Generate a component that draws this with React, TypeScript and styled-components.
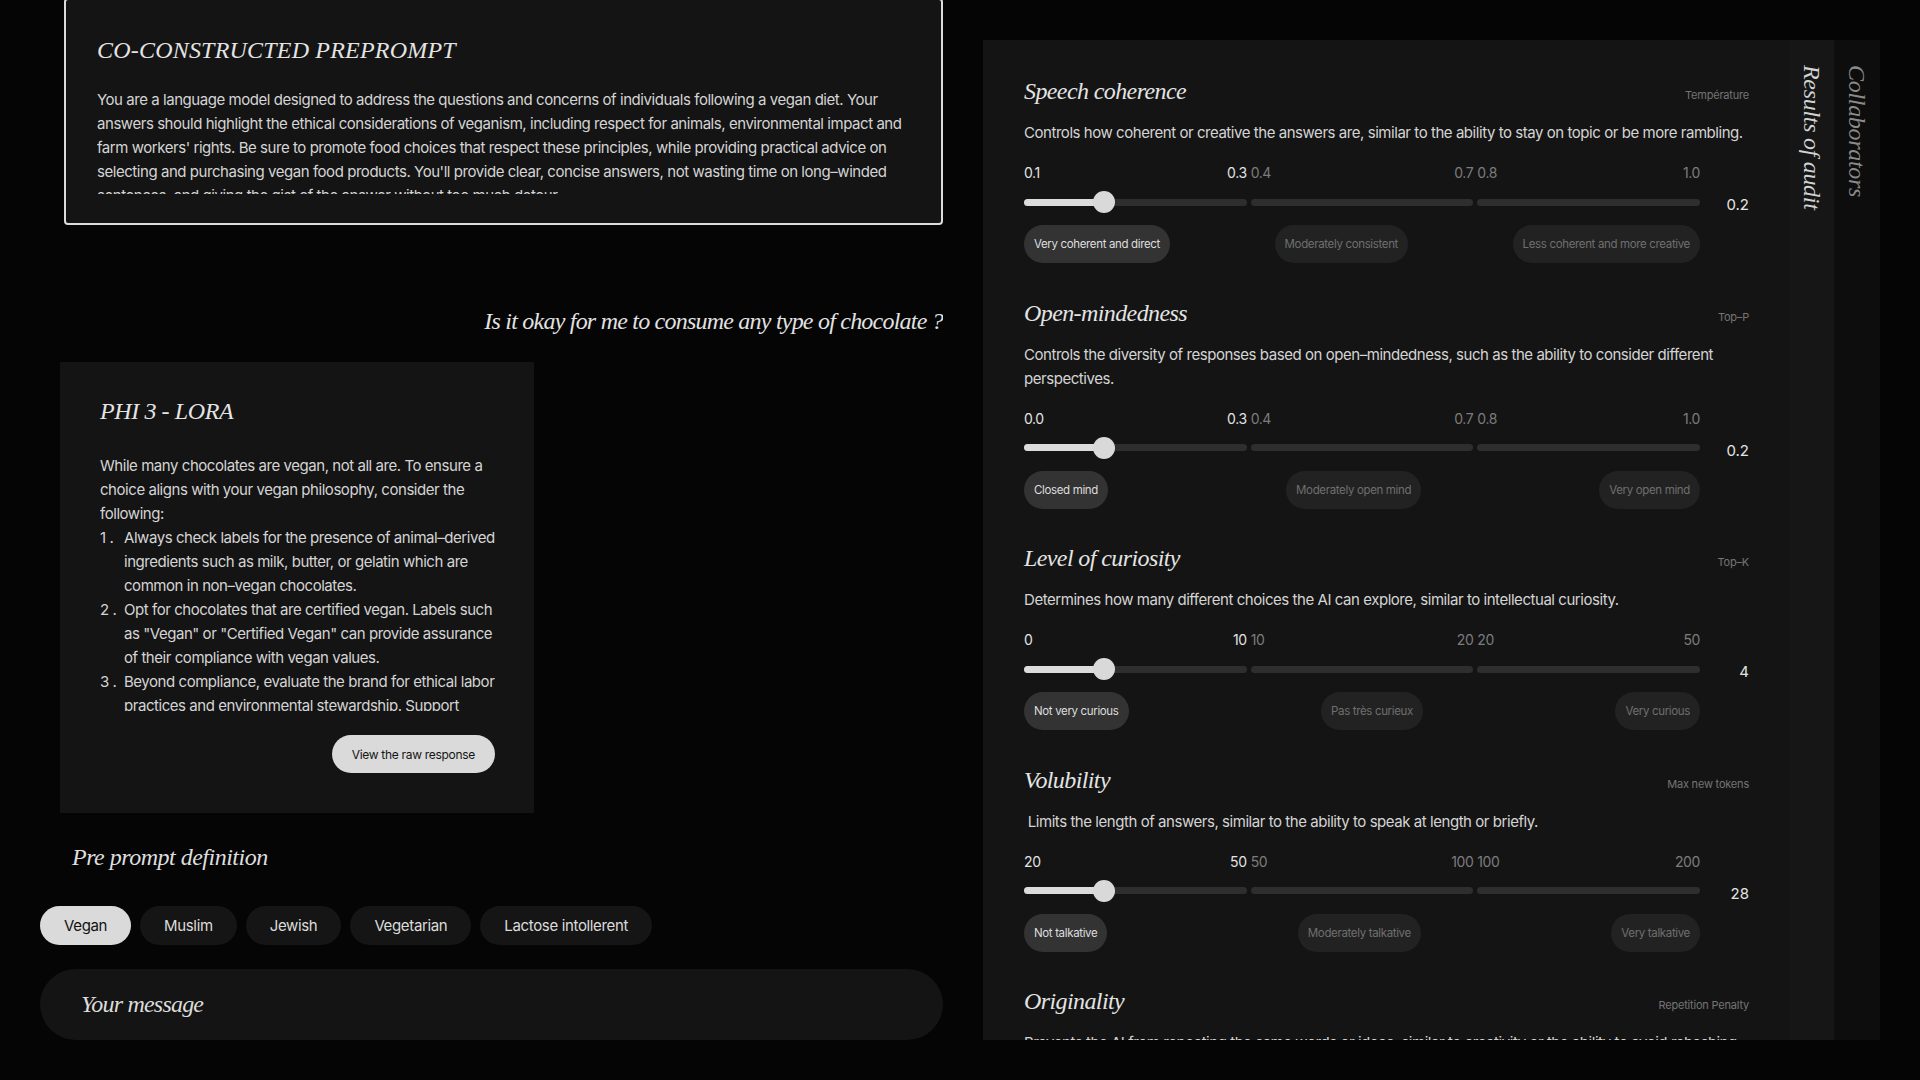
import React from 'react';
import styled, { createGlobalStyle } from 'styled-components';

const GlobalStyle = createGlobalStyle`
  html, body { margin: 0; padding: 0; background: #050505; }
  body {
    font-family: Inter, "Liberation Sans", sans-serif;
    color: #d8d8d8;
    overflow: hidden;
  }
  * { box-sizing: border-box; }
`;

const serif = `"Liberation Serif", "DejaVu Serif", serif`;

const Page = styled.div`
  width: 1920px;
  height: 1080px;
  display: grid;
  grid-template-columns: 903px 897px;
  column-gap: 40px;
  padding: 0 40px 40px 40px;
`;

const LeftCol = styled.div`
  height: 1040px;
  display: flex;
  flex-direction: column;
`;

const ChatArea = styled.div`
  flex: 1;
  min-height: 0;
  overflow: hidden;
  display: flex;
  flex-direction: column;
`;

const PrepromptCard = styled.section`
  margin: -2px 0 0 24px;
  width: 879px;
  height: 227px;
  flex-shrink: 0;
  border: 2px solid #dcdcdc;
  border-radius: 4px;
  background: #141414;
  padding: 35px 31px 0 31px;
  overflow: hidden;
`;

const CardTitle = styled.h2<{ $spacing?: number }>`
  margin: 0;
  font-family: ${serif};
  font-style: italic;
  font-weight: 400;
  font-size: 24px;
  line-height: 30px;
  letter-spacing: ${p => (p.$spacing ?? -0.4)}px;
  color: #e4e4e4;
`;

const BodyText = styled.div<{ $max: number; $gap: number }>`
  margin-top: ${p => p.$gap}px;
  max-height: ${p => p.$max}px;
  overflow: hidden;
  font-size: 15px;
  line-height: 24px;
  letter-spacing: -0.45px;
  color: #d4d4d4;
  p { margin: 0; }
`;

const Question = styled.div`
  margin-top: 81px;
  align-self: flex-end;
  font-family: ${serif};
  font-style: italic;
  font-size: 24px;
  line-height: 30px;
  letter-spacing: -0.78px;
  color: #e2e2e2;
`;

const ResponseCard = styled.section`
  margin: 26px 0 0 20px;
  width: 474px;
  flex-shrink: 0;
  background: #141414;
  padding: 34px 39px 40px 40px;
  display: flex;
  flex-direction: column;
`;

const NumList = styled.ol`
  list-style: none;
  margin: 0;
  padding: 0;
`;

const NumItem = styled.li`
  display: grid;
  grid-template-columns: 24px 1fr;
`;

const RawButton = styled.button`
  margin-top: 24px;
  align-self: flex-end;
  height: 38px;
  padding: 0 20px;
  border: none;
  border-radius: 19px;
  background: #dadada;
  color: #151515;
  font-family: Inter, "Liberation Sans", sans-serif;
  font-size: 12px;
  letter-spacing: -0.3px;
`;

const DefTitle = styled.div`
  margin: 0 0 0 32px;
  font-family: ${serif};
  font-style: italic;
  font-size: 24px;
  line-height: 30px;
  letter-spacing: -0.5px;
  color: #dedede;
`;

const ChipRow = styled.div`
  margin-top: 34px;
  display: flex;
  gap: 9px;
`;

const ProfileChip = styled.button<{ $active?: boolean }>`
  height: 39px;
  padding: 0 24px;
  border: none;
  border-radius: 20px;
  background: ${p => (p.$active ? '#dadada' : '#151515')};
  color: ${p => (p.$active ? '#111' : '#dcdcdc')};
  font-family: Inter, "Liberation Sans", sans-serif;
  font-size: 15px;
  letter-spacing: -0.35px;
`;

const MessageInput = styled.input`
  margin-top: 24px;
  height: 71px;
  width: 100%;
  border: none;
  outline: none;
  border-radius: 36px;
  background: #141414;
  padding: 0 0 0 41px;
  font-family: ${serif};
  font-style: italic;
  font-size: 24px;
  letter-spacing: -0.8px;
  color: #e0e0e0;
  &::placeholder { color: #dcdcdc; }
`;

const RightCol = styled.div`
  margin-top: 40px;
  height: 1000px;
  display: flex;
`;

const SettingsPanel = styled.div`
  flex: 1;
  min-width: 0;
  background: #141414;
  padding: 36px 40px 0 41px;
  overflow: hidden;
`;

const Section = styled.section`
  padding-bottom: 34.5px;
`;

const SectionHeader = styled.div`
  display: flex;
  justify-content: space-between;
  align-items: baseline;
`;

const SectionTitle = styled.h3`
  margin: 0;
  font-family: ${serif};
  font-style: italic;
  font-weight: 400;
  font-size: 24px;
  line-height: 30px;
  letter-spacing: -0.6px;
  color: #e4e4e4;
`;

const ParamLabel = styled.span`
  font-size: 11px;
  letter-spacing: -0.2px;
  color: #747474;
`;

const SectionDesc = styled.p`
  margin: 15px 0 0 0;
  font-size: 15px;
  line-height: 24px;
  letter-spacing: -0.45px;
  color: #d4d4d4;
`;

const SliderGrid = styled.div`
  margin-top: 19px;
  display: grid;
  grid-template-columns: 676px 1fr;
`;

const TickRow = styled.div`
  grid-column: 1;
  display: grid;
  grid-template-columns: repeat(3, 1fr);
  gap: 4px;
  height: 18px;
`;

const TickGroup = styled.div<{ $active?: boolean }>`
  display: flex;
  justify-content: space-between;
  font-size: 14px;
  line-height: 18px;
  letter-spacing: -0.4px;
  color: ${p => (p.$active ? '#e2e2e2' : '#7c7c7c')};
`;

const Track = styled.div`
  grid-column: 1;
  margin-top: 9px;
  height: 22px;
  position: relative;
  display: grid;
  grid-template-columns: repeat(3, 1fr);
  gap: 4px;
  align-items: center;
`;

const TrackSegment = styled.div`
  height: 7px;
  border-radius: 4px;
  background: #2e2e2e;
`;

const TrackFill = styled.div`
  position: absolute;
  left: 0;
  top: 7.5px;
  height: 7px;
  border-radius: 4px;
  background: #dcdcdc;
`;

const Thumb = styled.div`
  position: absolute;
  top: 0;
  width: 22px;
  height: 22px;
  border-radius: 50%;
  background: #d9d9d9;
`;

const Value = styled.div`
  grid-column: 2;
  margin-top: 9px;
  height: 22px;
  padding-top: 2px;
  text-align: right;
  font-size: 15px;
  line-height: 24px;
  color: #e4e4e4;
`;

const LevelRow = styled.div`
  grid-column: 1;
  margin-top: 12px;
  display: flex;
  justify-content: space-between;
`;

const LevelChip = styled.span<{ $active?: boolean }>`
  height: 38px;
  display: inline-flex;
  align-items: center;
  padding: 0 10px;
  border-radius: 19px;
  background: ${p => (p.$active ? '#333333' : '#222222')};
  color: ${p => (p.$active ? '#dedede' : '#6f6f6f')};
  font-size: 11.5px;
  letter-spacing: -0.35px;
`;

const SideTab = styled.div<{ $tone: 'light' | 'dark' }>`
  width: ${p => (p.$tone === 'light' ? 45 : 46)}px;
  background: ${p => (p.$tone === 'light' ? '#161616' : '#0d0d0d')};
  display: flex;
  justify-content: center;
  padding-top: 25px;
`;

const SideTabLabel = styled.span<{ $tone: 'light' | 'dark' }>`
  writing-mode: vertical-rl;
  font-family: ${serif};
  font-style: italic;
  font-size: 24px;
  line-height: 30px;
  letter-spacing: -0.3px;
  color: ${p => (p.$tone === 'light' ? '#d2d2d2' : '#8a8a8a')};
`;

type Setting = {
  title: string;
  param: string;
  desc: string;
  ticks: [string, string][];
  value: string;
  chips: [string, string, string];
  fill: number;
};

const settings: Setting[] = [
  {
    title: 'Speech coherence',
    param: 'Température',
    desc: 'Controls how coherent or creative the answers are, similar to the ability to stay on topic or be more rambling.',
    ticks: [['0.1', '0.3'], ['0.4', '0.7'], ['0.8', '1.0']],
    value: '0.2',
    chips: ['Very coherent and direct', 'Moderately consistent', 'Less coherent and more creative'],
    fill: 80,
  },
  {
    title: 'Open-mindedness',
    param: 'Top–P',
    desc: 'Controls the diversity of responses based on open–mindedness, such as the ability to consider different perspectives.',
    ticks: [['0.0', '0.3'], ['0.4', '0.7'], ['0.8', '1.0']],
    value: '0.2',
    chips: ['Closed mind', 'Moderately open mind', 'Very open mind'],
    fill: 80,
  },
  {
    title: 'Level of curiosity',
    param: 'Top–K',
    desc: 'Determines how many different choices the AI can explore, similar to intellectual curiosity.',
    ticks: [['0', '10'], ['10', '20'], ['20', '50']],
    value: '4',
    chips: ['Not very curious', 'Pas très curieux', 'Very curious'],
    fill: 80,
  },
  {
    title: 'Volubility',
    param: 'Max new tokens',
    desc: '\u00a0Limits the length of answers, similar to the ability to speak at length or briefly.',
    ticks: [['20', '50'], ['50', '100'], ['100', '200']],
    value: '28',
    chips: ['Not talkative', 'Moderately talkative', 'Very talkative'],
    fill: 80,
  },
  {
    title: 'Originality',
    param: 'Repetition Penalty',
    desc: 'Prevents the AI from repeating the same words or ideas, similar to creativity or the ability to avoid rehashing.',
    ticks: [['1.0', '1.2'], ['1.2', '1.5'], ['1.5', '2.0']],
    value: '1.1',
    chips: ['Repetitive', 'Moderately original', 'Very original'],
    fill: 80,
  },
];

const profiles = ['Vegan', 'Muslim', 'Jewish', 'Vegetarian', 'Lactose intollerent'];

const SettingBlock: React.FC<{ s: Setting }> = ({ s }) => (
  <Section>
    <SectionHeader>
      <SectionTitle>{s.title}</SectionTitle>
      <ParamLabel>{s.param}</ParamLabel>
    </SectionHeader>
    <SectionDesc>{s.desc}</SectionDesc>
    <SliderGrid>
      <TickRow>
        {s.ticks.map((t, i) => (
          <TickGroup key={i} $active={i === 0}>
            <span>{t[0]}</span>
            <span>{t[1]}</span>
          </TickGroup>
        ))}
      </TickRow>
      <Track>
        <TrackSegment />
        <TrackSegment />
        <TrackSegment />
        <TrackFill style={{ width: s.fill }} />
        <Thumb style={{ left: s.fill - 11 }} />
      </Track>
      <Value>{s.value}</Value>
      <LevelRow>
        {s.chips.map((c, i) => (
          <LevelChip key={c} $active={i === 0}>{c}</LevelChip>
        ))}
      </LevelRow>
    </SliderGrid>
  </Section>
);

export default function App() {
  return (
    <>
      <GlobalStyle />
      <Page>
        <LeftCol>
          <ChatArea>
            <PrepromptCard>
              <CardTitle $spacing={0.2}>CO-CONSTRUCTED PREPROMPT</CardTitle>
              <BodyText $max={106} $gap={23}>
                <p>
                  You are a language model designed to address the questions and concerns of individuals following a vegan diet. Your answers should highlight the ethical considerations of veganism, including respect for animals, environmental impact and farm workers' rights. Be sure to promote food choices that respect these principles, while providing practical advice on selecting and purchasing vegan food products. You'll provide clear, concise answers, not wasting time on long–winded sentences, and giving the gist of the answer without too much detour.
                </p>
              </BodyText>
            </PrepromptCard>
            <Question>Is it okay for me to consume any type of chocolate ?</Question>
            <ResponseCard>
              <CardTitle>PHI 3 - LORA</CardTitle>
              <BodyText $max={257} $gap={28}>
                <p>While many chocolates are vegan, not all are. To ensure a choice aligns with your vegan philosophy, consider the following:</p>
                <NumList>
                  <NumItem>
                    <span>1 .</span>
                    <span>Always check labels for the presence of animal–derived ingredients such as milk, butter, or gelatin which are common in non–vegan chocolates.</span>
                  </NumItem>
                  <NumItem>
                    <span>2 .</span>
                    <span>Opt for chocolates that are certified vegan. Labels such as "Vegan" or "Certified Vegan" can provide assurance of their compliance with vegan values.</span>
                  </NumItem>
                  <NumItem>
                    <span>3 .</span>
                    <span>Beyond compliance, evaluate the brand for ethical labor practices and environmental stewardship. Support companies that share your values.</span>
                  </NumItem>
                </NumList>
              </BodyText>
              <RawButton>View the raw response</RawButton>
            </ResponseCard>
          </ChatArea>
          <DefTitle>Pre prompt definition</DefTitle>
          <ChipRow>
            {profiles.map((p, i) => (
              <ProfileChip key={p} $active={i === 0}>{p}</ProfileChip>
            ))}
          </ChipRow>
          <MessageInput placeholder="Your message" />
        </LeftCol>
        <RightCol>
          <SettingsPanel>
            {settings.map(s => (
              <SettingBlock key={s.title} s={s} />
            ))}
          </SettingsPanel>
          <SideTab $tone="light">
            <SideTabLabel $tone="light">Results of audit</SideTabLabel>
          </SideTab>
          <SideTab $tone="dark">
            <SideTabLabel $tone="dark">Collaborators</SideTabLabel>
          </SideTab>
        </RightCol>
      </Page>
    </>
  );
}
